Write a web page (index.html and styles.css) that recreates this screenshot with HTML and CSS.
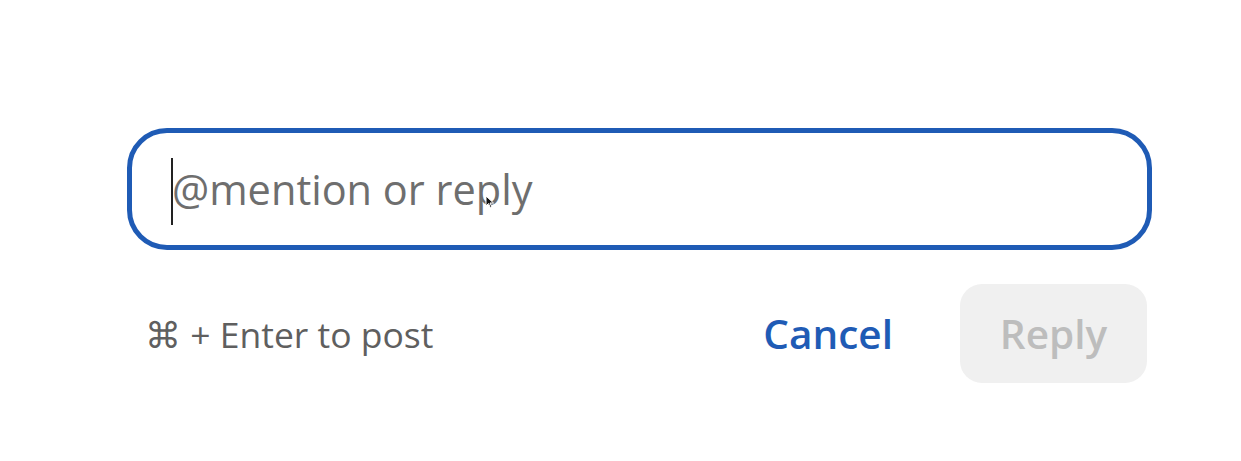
FILE: index.html
```html
<!DOCTYPE html>
<html>
<head>
<meta charset="utf-8">
<link rel="stylesheet" href="styles.css">
</head>
<body>
<div class="composer">
  <div class="field">
    <span class="caret"></span>
    <span class="placeholder">@mention or reply</span>
    <svg class="pointer" width="10" height="14" viewBox="0 0 10 14"><path d="M1 1 L1 11 L3.5 8.5 L5.5 13 L7 12.3 L5 8 L8.5 8 Z" fill="#111" stroke="#fff" stroke-width="1"/></svg>
  </div>
  <div class="actions">
    <span class="hint">⌘ + Enter to post</span>
    <div class="buttons">
      <button class="cancel">Cancel</button>
      <button class="reply" disabled>Reply</button>
    </div>
  </div>
</div>
</body>
</html>
```
FILE: styles.css
```css
html, body {
  margin: 0;
  background: #ffffff;
}
body {
  font-family: "Open Sans", "Noto Sans", sans-serif;
}
.composer {
  width: 1025px;
  margin-left: 127px;
  padding-top: 128px;
}
.field {
  position: relative;
  box-sizing: border-box;
  height: 122px;
  border: 5px solid #1f5bb5;
  border-radius: 40px;
  display: flex;
  align-items: center;
  padding-left: 39px;
}
.caret {
  width: 2px;
  height: 67px;
  background: #222;
  margin-top: 4px;
}
.placeholder {
  font-size: 41.5px;
  color: #6e6e6e;
  margin-left: -1px;
  margin-top: 0px;
}
.pointer {
  position: absolute;
  left: 353px;
  top: 62px;
}
.actions {
  margin-top: 34px;
  height: 99px;
  display: flex;
  align-items: center;
  justify-content: space-between;
  padding-left: 18px;
  padding-right: 5px;
}
.hint {
  font-size: 35.5px;
  color: #5f5f5f;
}
.buttons {
  display: flex;
  align-items: center;
  gap: 67px;
  height: 100%;
}
.buttons button {
  font-family: inherit;
  border: none;
  background: none;
  padding: 0;
  font-size: 40.5px;
  font-weight: 600;
}
.cancel {
  color: #1f5bb5;
}
.reply {
  width: 187px;
  height: 99px;
  border-radius: 22px;
  background: #f0f0f0 !important;
  color: #bdbdbd;
}
```
